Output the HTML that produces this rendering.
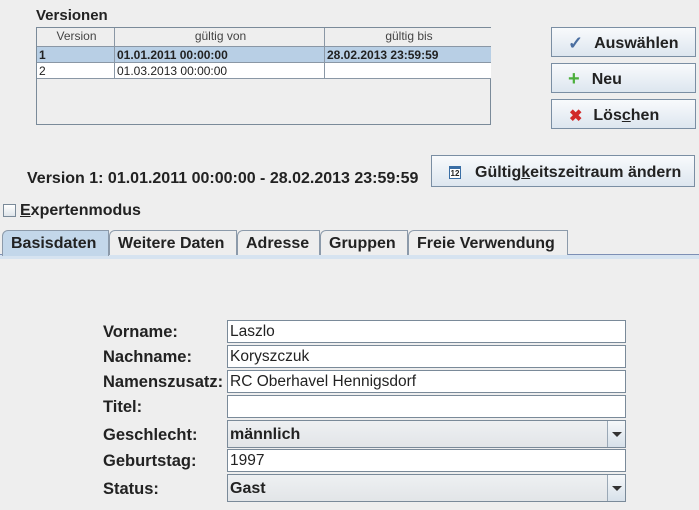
<!DOCTYPE html>
<html><head><meta charset="utf-8"><style>
*{box-sizing:border-box;margin:0;padding:0}
body{width:699px;height:510px;background:#eeeeee;font-family:"Liberation Sans",Arial,sans-serif;color:#222;position:relative;overflow:hidden}
.a{position:absolute}
.b{font-weight:bold}
.tbl{left:36px;top:27px;width:455px;height:98px;border:1px solid #7a8a99;background:#eeeeee}
.cell{position:absolute;font-size:12px;line-height:16px;border-right:1px solid #8a97a5;border-bottom:1px solid #8a97a5;padding-left:2px;white-space:nowrap}
.btn{position:absolute;border:1px solid #7a8ea3;background:linear-gradient(#f8fafc,#dde6ef);font-weight:bold;font-size:16px;color:#222;display:flex;align-items:center;padding-top:3px}
.tab{position:absolute;top:230px;height:25px;border:1px solid #8c9aaa;border-bottom:none;font-weight:bold;font-size:16px;line-height:26px;padding-left:8px;background:#eeeeee;border-top-left-radius:6px 6px;white-space:nowrap}
.lab{position:absolute;left:103px;font-weight:bold;font-size:16.5px}
.fld{position:absolute;left:227px;width:399px;height:23px;background:#fff;border:1px solid #7a8a99;font-size:15.5px;line-height:22px;padding-left:2px}
.cmb{position:absolute;left:227px;width:399px;height:28px;background:linear-gradient(#eef0f2,#e2e5e8);border:1px solid #7a8a99;font-size:16px;font-weight:bold;line-height:28px;padding-left:2px}
.arr{position:absolute;right:0;top:0;width:18px;height:26px;border-left:1px solid #9aa8b6;background:linear-gradient(#f6f8fa,#d7e1ea)}
.arr:after{content:"";position:absolute;left:4px;top:11px;border-left:5px solid transparent;border-right:5px solid transparent;border-top:5px solid #333}
</style></head><body>
<div class="a b" style="left:36px;top:7px;font-size:15px">Versionen</div>
<div class="a tbl">
 <div class="cell" style="left:0;top:0;width:78px;height:19px;text-align:center;color:#444;background:#eeeeee">Version</div>
 <div class="cell" style="left:78px;top:0;width:210px;height:19px;text-align:center;color:#444;background:#eeeeee">gültig von</div>
 <div class="cell" style="left:288px;top:0;width:166px;height:19px;text-align:center;color:#444;background:#eeeeee;border-right:none">gültig bis</div>
 <div class="cell b" style="left:0;top:19px;width:78px;height:16px;background:#b8cfe5">1</div>
 <div class="cell b" style="left:78px;top:19px;width:210px;height:16px;background:#b8cfe5">01.01.2011 00:00:00</div>
 <div class="cell b" style="left:288px;top:19px;width:166px;height:16px;background:#b8cfe5;border-right:none">28.02.2013 23:59:59</div>
 <div class="cell" style="left:0;top:35px;width:78px;height:16px;background:#fff">2</div>
 <div class="cell" style="left:78px;top:35px;width:210px;height:16px;background:#fff">01.03.2013 00:00:00</div>
 <div class="cell" style="left:288px;top:35px;width:166px;height:16px;background:#fff;border-right:none"></div>
</div>
<div class="btn" style="left:551px;top:27px;width:145px;height:30px;padding-left:16px"><span style="color:#4a6ea0;font-size:18px;margin-right:11px">✓</span>Auswählen</div>
<div class="btn" style="left:551px;top:63px;width:145px;height:30px;padding-left:16px"><span style="color:#4caf3c;font-size:20px;margin-right:12px;font-weight:900">+</span>Neu</div>
<div class="btn" style="left:551px;top:99px;width:145px;height:30px;padding-left:17px"><span style="color:#d12a2a;font-size:16px;margin-right:11px">✖</span>Lös<u>c</u>hen</div>
<div class="a b" style="left:27px;top:170px;font-size:16px">Version 1: 01.01.2011 00:00:00 - 28.02.2013 23:59:59</div>
<div class="btn" style="left:431px;top:155px;width:264px;height:32px;padding-left:17px"><span style="display:inline-block;width:12px;height:13px;border:1px solid #3a6ea5;border-top:3px solid #3a6ea5;font-size:8px;line-height:9px;text-align:center;margin-right:14px;background:#fff">12</span>Gültig<u>k</u>eitszeitraum ändern</div>
<div class="a" style="left:3px;top:204px;width:13px;height:13px;border:1px solid #7a8a99;background:linear-gradient(#fff,#dfe5ea)"></div>
<div class="a b" style="left:20px;top:202px;font-size:16px"><u>E</u>xpertenmodus</div>
<div class="a" style="left:0;top:254px;width:699px;height:256px;background:#eeeeee;border-top:1px solid #7d8fb5"></div>
<div class="a" style="left:0;top:255px;width:699px;height:4px;background:#d6e3f0"></div>
<div class="tab" style="left:2px;width:107px;background:#c3d7ea;height:26px">Basisdaten</div>
<div class="tab" style="left:109px;width:128px">Weitere Daten</div>
<div class="tab" style="left:237px;width:83px">Adresse</div>
<div class="tab" style="left:320px;width:88px">Gruppen</div>
<div class="tab" style="left:408px;width:160px">Freie Verwendung</div>
<div class="lab" style="top:323px">Vorname:</div>
<div class="fld" style="top:320px">Laszlo</div>
<div class="lab" style="top:348px">Nachname:</div>
<div class="fld" style="top:345px">Koryszczuk</div>
<div class="lab" style="top:373px">Namenszusatz:</div>
<div class="fld" style="top:370px">RC Oberhavel Hennigsdorf</div>
<div class="lab" style="top:398px">Titel:</div>
<div class="fld" style="top:395px"></div>
<div class="lab" style="top:426px">Geschlecht:</div>
<div class="cmb" style="top:420px">männlich<div class="arr"></div></div>
<div class="lab" style="top:452px">Geburtstag:</div>
<div class="fld" style="top:449px">1997</div>
<div class="lab" style="top:480px">Status:</div>
<div class="cmb" style="top:474px">Gast<div class="arr"></div></div>
</body></html>
